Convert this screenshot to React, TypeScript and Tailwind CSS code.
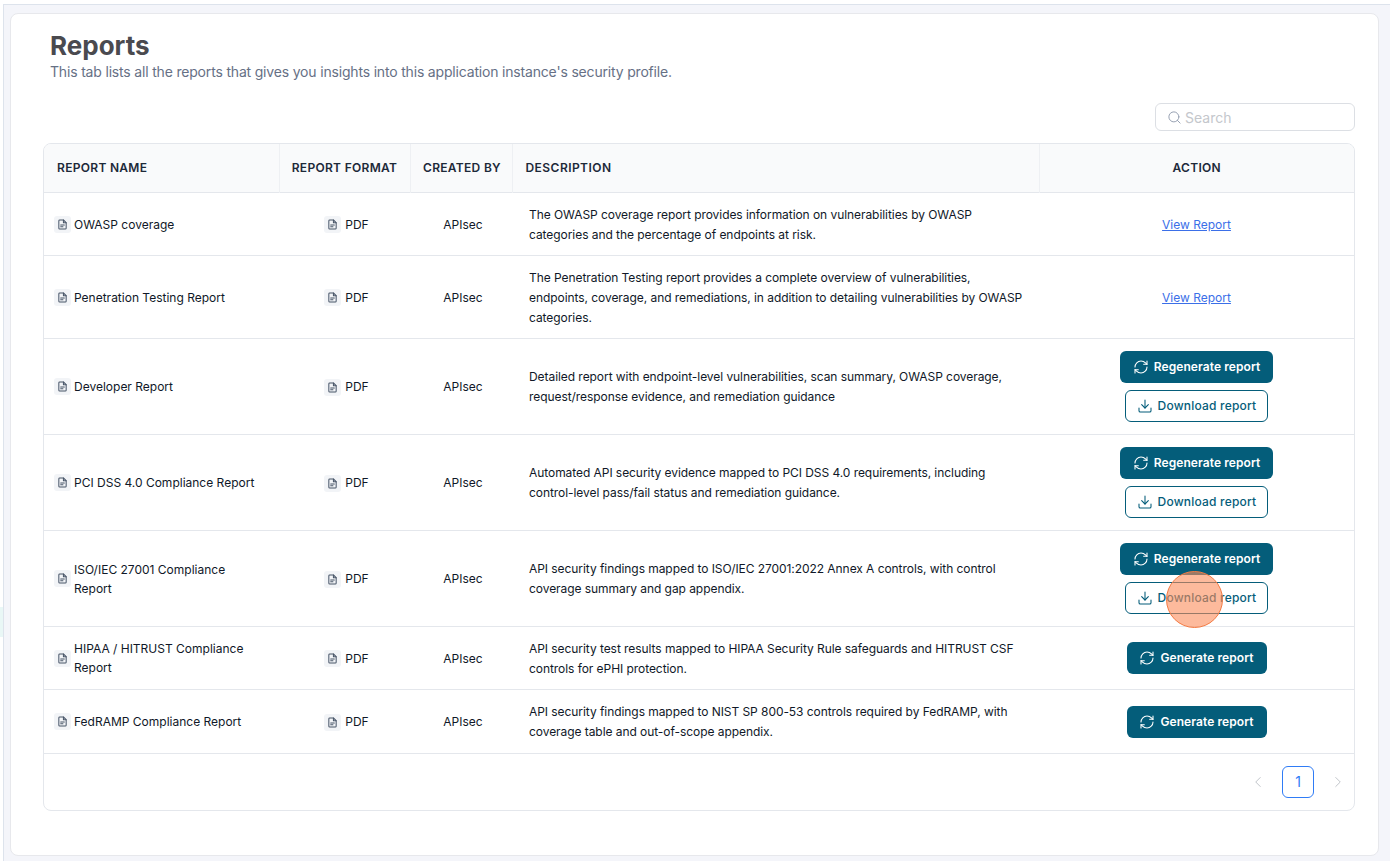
import { Download, RefreshCw, Search, ChevronLeft, ChevronRight } from "lucide-react";

function FileIcon() {
  return (
    <span className="inline-flex h-[17px] w-[17px] shrink-0 items-center justify-center rounded-[3px] bg-[#f2f4f7]">
      <svg width="11" height="11" viewBox="0 0 24 24" fill="none" stroke="#475467" strokeWidth="2.2" strokeLinecap="round" strokeLinejoin="round">
        <path d="M14 2H6a2 2 0 0 0-2 2v16a2 2 0 0 0 2 2h12a2 2 0 0 0 2-2V8z" />
        <path d="M14 2v6h6" />
        <path d="M8 13h8M8 17h5" />
      </svg>
    </span>
  );
}

type Row = {
  name: string;
  desc: string;
  h: string;
  action: "view" | "regen" | "gen";
  actionPad?: string;
  overlay?: boolean;
};

const rows: Row[] = [
  {
    name: "OWASP coverage",
    desc: "The OWASP coverage report provides information on vulnerabilities by OWASP categories and the percentage of endpoints at risk.",
    h: "h-[63px]",
    action: "view",
    actionPad: "pt-[2px]",
  },
  {
    name: "Penetration Testing Report",
    desc: "The Penetration Testing report provides a complete overview of vulnerabilities, endpoints, coverage, and remediations, in addition to detailing vulnerabilities by OWASP categories.",
    h: "h-[83px]",
    action: "view",
    actionPad: "pt-[2px]",
  },
  {
    name: "Developer Report",
    desc: "Detailed report with endpoint-level vulnerabilities, scan summary, OWASP coverage, request/response evidence, and remediation guidance",
    h: "h-[96px]",
    action: "regen",
  },
  {
    name: "PCI DSS 4.0 Compliance Report",
    desc: "Automated API security evidence mapped to PCI DSS 4.0 requirements, including control-level pass/fail status and remediation guidance.",
    h: "h-[96px]",
    action: "regen",
  },
  {
    name: "ISO/IEC 27001 Compliance Report",
    desc: "API security findings mapped to ISO/IEC 27001:2022 Annex A controls, with control coverage summary and gap appendix.",
    h: "h-[96px]",
    action: "regen",
    overlay: true,
  },
  {
    name: "HIPAA / HITRUST Compliance Report",
    desc: "API security test results mapped to HIPAA Security Rule safeguards and HITRUST CSF controls for ePHI protection.",
    h: "h-[63px]",
    action: "gen",
  },
  {
    name: "FedRAMP Compliance Report",
    desc: "API security findings mapped to NIST SP 800-53 controls required by FedRAMP, with coverage table and out-of-scope appendix.",
    h: "h-[64px]",
    action: "gen",
    actionPad: "pt-[2px]",
  },
];

function SolidButton({ label, width }: { label: string; width: string }) {
  return (
    <button className={`flex h-8 ${width} items-center justify-center gap-[5px] rounded-md bg-[#045d7a] text-[12px] font-semibold tracking-[0.08px] text-white`}>
      <RefreshCw size={16} strokeWidth={1.6} />
      {label}
    </button>
  );
}

function Action({ row }: { row: Row }) {
  if (row.action === "view") {
    return (
      <a href="#" className="text-[12px] text-[#3b6fe8] underline">
        View Report
      </a>
    );
  }
  if (row.action === "gen") {
    return (
      <div className="flex justify-center">
        <SolidButton label="Generate report" width="w-[140px]" />
      </div>
    );
  }
  return (
    <div className="flex flex-col items-center gap-[7px]">
      <SolidButton label="Regenerate report" width="w-[153px]" />
      <button className="relative flex h-8 w-[143px] items-center justify-center gap-[5px] rounded-md border border-[#045d7a] bg-white text-[12px] font-medium tracking-[0.2px] text-[#045d7a]">
        <Download size={16} strokeWidth={1.6} />
        Download report
        {row.overlay && (
          <span className="absolute left-[40px] top-[-12px] h-[57px] w-[57px] rounded-full border border-[#f47a42] bg-[#fb8c5a]/60" />
        )}
      </button>
    </div>
  );
}

export default function App() {
  return (
    <div className="h-[861px] overflow-hidden bg-white font-['Inter',sans-serif] text-[#101828]">
      <div className="flex h-full pt-1">
        <div className="w-[3px] shrink-0">
          <div className="mt-[603px] h-[30px] bg-[#e9f7f6]" />
        </div>
        <div className="flex-1 border-l border-t border-[#dde3ec] bg-[#f4f5fa] pb-[5px] pl-[6px] pr-[11px] pt-2">
          <div className="h-[843px] rounded-lg border border-[#e7e8ec] bg-white pl-8 pr-[23px]">
            <h1 className="mt-[16px] pl-[7px] text-[26px] font-bold leading-[32px] text-[#4a4a4f]">Reports</h1>
            <p className="pl-[7px] text-[14px] leading-[20px] tracking-[-0.18px] text-[#667085]">
              This tab lists all the reports that gives you insights into this application instance's security profile.
            </p>
            <div className="mt-[21px] flex justify-end">
              <div className="flex h-7 w-[200px] items-center gap-[3px] rounded-md border border-[#dcdfe4] bg-white px-[11px]">
                <Search size={15} strokeWidth={1.6} className="text-[#98a2b3]" />
                <span className="text-[14px] text-[#c4c7cc]">Search</span>
              </div>
            </div>
            <div className="mt-3 overflow-hidden rounded-lg border border-[#e4e7ec]">
              <table className="w-full table-fixed border-collapse text-[12px]">
                <colgroup>
                  <col className="w-[235px]" />
                  <col className="w-[131px]" />
                  <col className="w-[102px]" />
                  <col className="w-[527px]" />
                  <col />
                </colgroup>
                <thead>
                  <tr className="h-[48px] border-b border-[#e4e7ec] bg-[#f9fafb] text-[12px] font-semibold tracking-[0.3px] text-[#1d2939]">
                    <th className="border-r border-[#eef0f3] pl-[13px] text-left font-semibold">REPORT NAME</th>
                    <th className="border-r border-[#eef0f3] text-center font-semibold">REPORT FORMAT</th>
                    <th className="border-r border-[#eef0f3] pl-[2px] text-center font-semibold">CREATED BY</th>
                    <th className="border-r border-[#eef0f3] pl-[13px] text-left font-semibold tracking-[0.45px]">DESCRIPTION</th>
                    <th className="text-center font-semibold">ACTION</th>
                  </tr>
                </thead>
                <tbody>
                  {rows.map((row) => (
                    <tr key={row.name} className={`${row.h} border-b border-[#e4e7ec]`}>
                      <td className="pl-[10px] pr-5 pt-[1px]">
                        <div className="flex items-center gap-[3px] leading-[19px]">
                          <FileIcon />
                          <span>{row.name}</span>
                        </div>
                      </td>
                      <td className="pl-1 pt-[2px]">
                        <div className="flex items-center justify-center gap-[4px]">
                          <FileIcon />
                          <span>PDF</span>
                        </div>
                      </td>
                      <td className="pl-1 pt-[2px] text-center">APIsec</td>
                      <td className="pl-[17px] pr-4 pt-[2px] leading-[20px] tracking-[-0.06px]">{row.desc}</td>
                      <td className={`text-center ${row.actionPad ?? ""}`}>
                        <Action row={row} />
                      </td>
                    </tr>
                  ))}
                </tbody>
              </table>
              <div className="flex h-[56px] items-center justify-end gap-[15px] pr-[7px]">
                <ChevronLeft size={18} strokeWidth={1.3} className="text-[#bfc3c9]" />
                <span className="flex h-8 w-8 items-center justify-center rounded-md border border-[#2f7cf6] text-[14px] text-[#2f7cf6]">
                  1
                </span>
                <ChevronRight size={18} strokeWidth={1.3} className="text-[#bfc3c9]" />
              </div>
            </div>
          </div>
        </div>
      </div>
    </div>
  );
}
